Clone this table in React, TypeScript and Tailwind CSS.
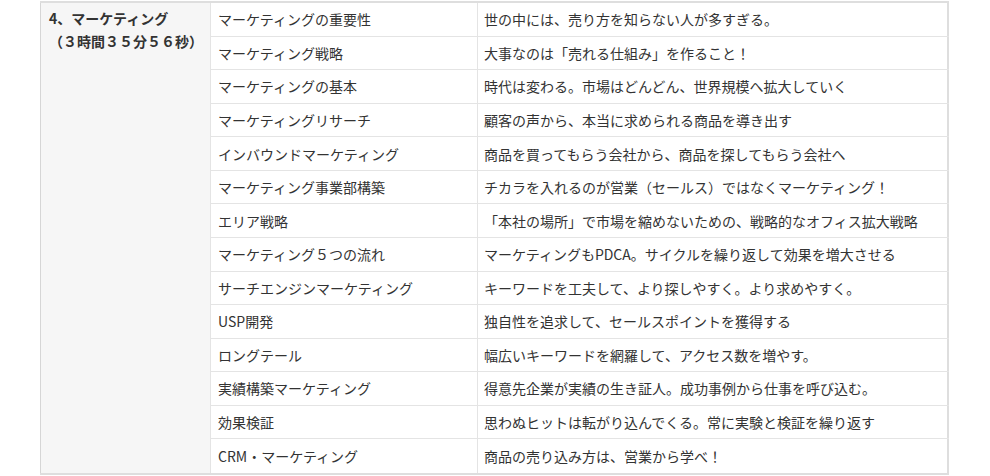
import React from 'react'

const rows: [string, string][] = [
  ['マーケティングの重要性', '世の中には、売り方を知らない人が多すぎる。'],
  ['マーケティング戦略', '大事なのは「売れる仕組み」を作ること！'],
  ['マーケティングの基本', '時代は変わる。市場はどんどん、世界規模へ拡大していく'],
  ['マーケティングリサーチ', '顧客の声から、本当に求められる商品を導き出す'],
  ['インバウンドマーケティング', '商品を買ってもらう会社から、商品を探してもらう会社へ'],
  ['マーケティング事業部構築', 'チカラを入れるのが営業（セールス）ではなくマーケティング！'],
  ['エリア戦略', '「本社の場所」で市場を縮めないための、戦略的なオフィス拡大戦略'],
  ['マーケティング５つの流れ', 'マーケティングもPDCA。サイクルを繰り返して効果を増大させる'],
  ['サーチエンジンマーケティング', 'キーワードを工夫して、より探しやすく。より求めやすく。'],
  ['USP開発', '独自性を追求して、セールスポイントを獲得する'],
  ['ロングテール', '幅広いキーワードを網羅して、アクセス数を増やす。'],
  ['実績構築マーケティング', '得意先企業が実績の生き証人。成功事例から仕事を呼び込む。'],
  ['効果検証', '思わぬヒットは転がり込んでくる。常に実験と検証を繰り返す'],
  ['CRM・マーケティング', '商品の売り込み方は、営業から学べ！']
]

const App: React.FC = () => {
  return (
    <div className="min-h-[476px] bg-white pt-px text-[14px] text-[#333] font-['Noto_Sans_CJK_JP','Noto_Sans',sans-serif]">
      <div className="ml-[40px] flex w-[909px] border-t-2 border-b-2 border-[#dedede]">
        <div className="w-[170px] shrink-0 border-l border-[#d6d6d6] bg-[#f6f6f6] px-[8px] pt-[4px] font-bold leading-[23px]">
          <div>4、マーケティング</div>
          <div>（３時間３５分５６秒）</div>
        </div>
        <div className="flex-1">
          {rows.map(([topic, note], i) => (
            <div
              key={i}
              className={`flex h-[33.57px] ${i < rows.length - 1 ? 'border-b border-[#e4e4e4]' : ''}`}
            >
              <div className="flex w-[267px] shrink-0 items-center border-l border-[#e4e4e4] px-[7px] leading-none">
                {topic}
              </div>
              <div className="flex flex-1 items-center border-l border-r-2 border-l-[#e4e4e4] border-r-[#dedede] px-[6px] leading-none whitespace-nowrap">
                {note}
              </div>
            </div>
          ))}
        </div>
      </div>
    </div>
  )
}

export default App
